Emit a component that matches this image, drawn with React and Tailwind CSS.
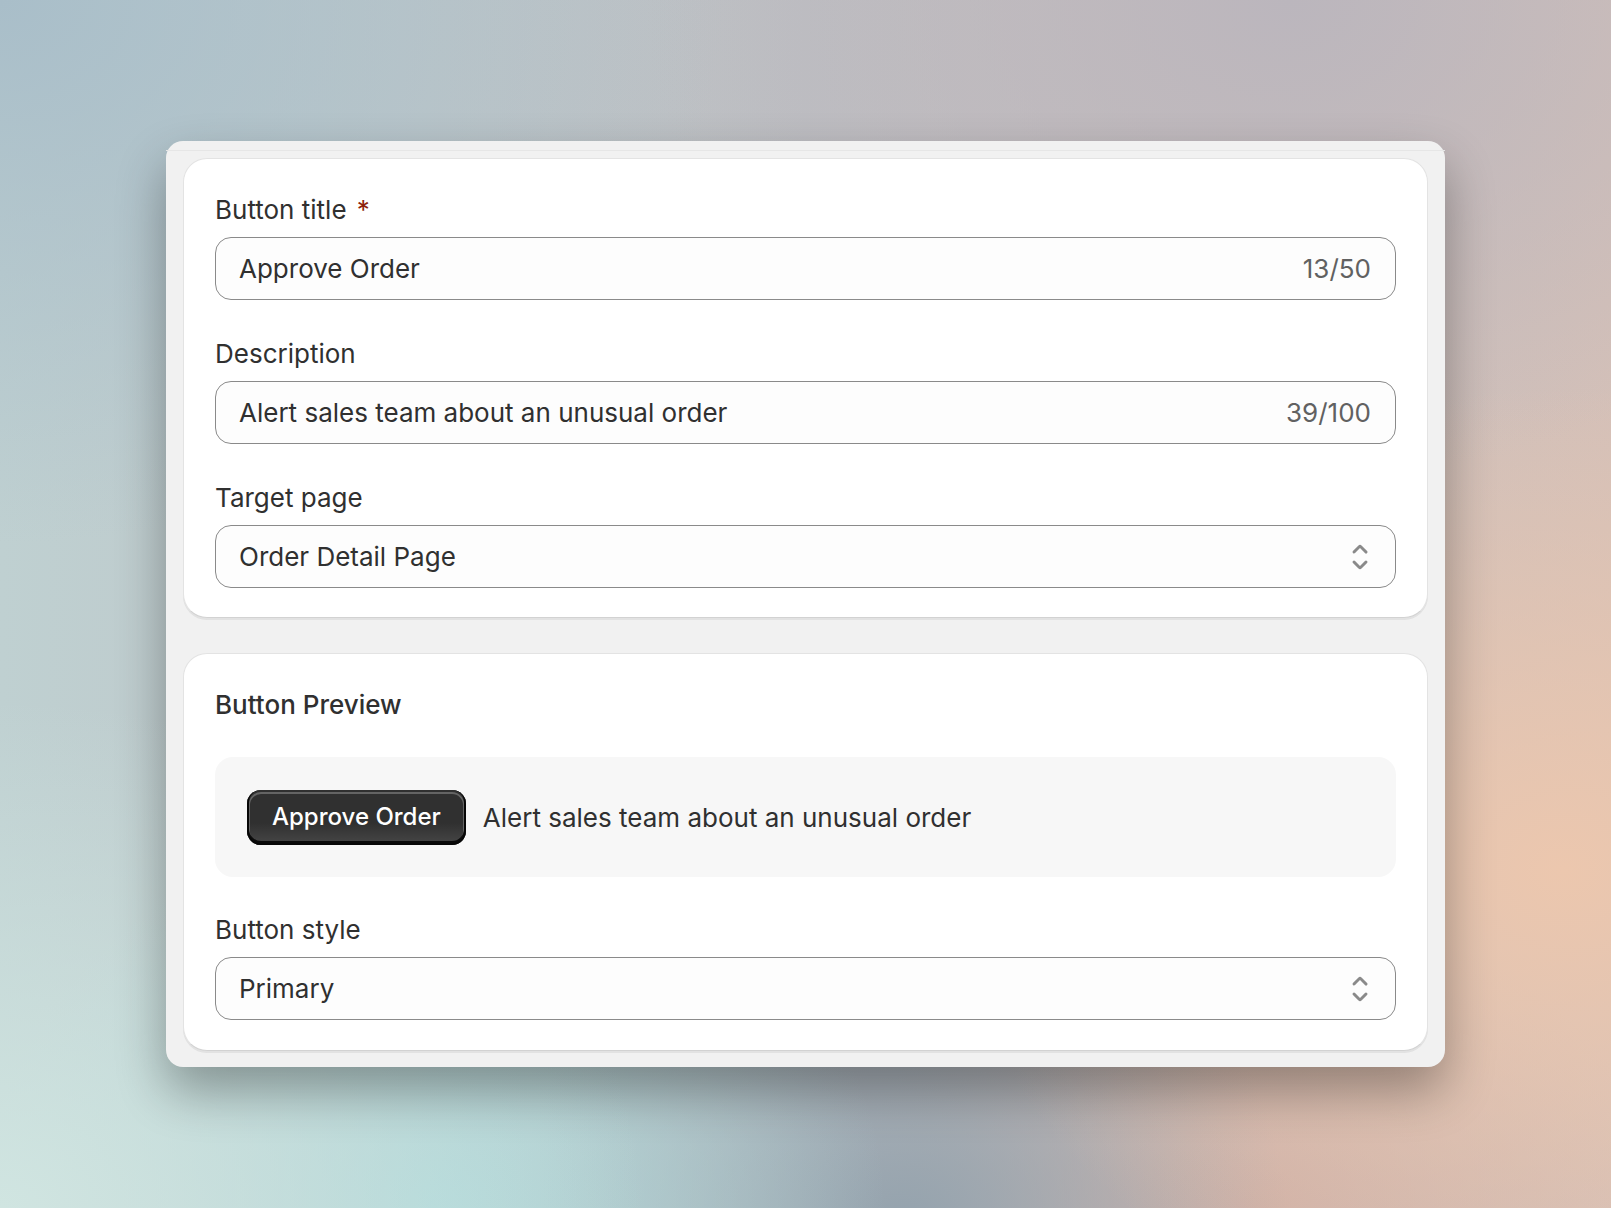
import React from "react";

function SelectIcon() {
  return (
    <svg viewBox="0 0 20 20" className="w-[40px] h-[40px] fill-[#8a8a8a]" aria-hidden="true">
      <path d="M10.884 4.323a1.25 1.25 0 0 0-1.768 0l-2.646 2.647a.75.75 0 0 0 1.06 1.06l2.47-2.47 2.47 2.47a.75.75 0 1 0 1.06-1.06l-2.646-2.647Z" />
      <path d="m13.53 13.03-2.646 2.647a1.25 1.25 0 0 1-1.768 0l-2.646-2.647a.75.75 0 0 1 1.06-1.06l2.47 2.47 2.47-2.47a.75.75 0 0 1 1.06 1.06Z" />
    </svg>
  );
}

function Label({ children, required }) {
  return (
    <div className="text-[26px] leading-[36px] text-[#303030] mb-[9px]">
      {children}
      {required ? <span className="ml-[3px] text-[#8e1f0b]"> *</span> : null}
    </div>
  );
}

function TextInput({ value, counter }) {
  return (
    <div className="h-[63px] rounded-[16px] border border-[#8a8a8a] bg-[#fdfdfd] flex items-center justify-between pl-[23px] pr-[24px] text-[26px] text-[#303030]">
      <span>{value}</span>
      <span className="text-[#616161]">{counter}</span>
    </div>
  );
}

function SelectInput({ value }) {
  return (
    <div className="h-[63px] rounded-[16px] border border-[#8a8a8a] bg-[#fdfdfd] flex items-center justify-between pl-[23px] pr-[15px] text-[26px] text-[#303030]">
      <span>{value}</span>
      <SelectIcon />
    </div>
  );
}

function Card({ children, className }) {
  return (
    <div
      className={
        "bg-white rounded-[24px] border border-[#e3e3e3] border-b-[#d2d2d2] shadow-[0_2px_0_rgba(26,26,26,0.07)] px-[31px] " +
        className
      }
    >
      {children}
    </div>
  );
}

export default function App() {
  return (
    <div className="min-h-screen w-full flex items-center justify-center font-['Inter','Noto_Sans',sans-serif] bg-[radial-gradient(38%_40%_at_97%_72%,#ecc7ae_0%,transparent_100%),radial-gradient(40%_42%_at_0%_100%,#d0e5e1_0%,transparent_100%),radial-gradient(28%_32%_at_27%_100%,#aed8d9_0%,transparent_100%),radial-gradient(24%_30%_at_56%_102%,#93a2ad_0%,transparent_100%),radial-gradient(25%_25%_at_78%_100%,#cfb0a6_0%,transparent_100%),radial-gradient(45%_45%_at_0%_0%,#a9bec9_0%,transparent_100%),radial-gradient(40%_40%_at_80%_0%,#bbb6bd_0%,transparent_100%),linear-gradient(90deg,#bfd0d1_0%,#bdbec2_50%,#d4c0b8_100%)]">
      <div className="w-[1279px] rounded-[17px] bg-[#f1f1f1] pt-[9px] shadow-[0_24px_50px_rgba(0,0,0,0.33)]">
        <div className="border-t border-[#e6e6e6] px-[17px] pt-[7px] pb-[16px] flex flex-col gap-[35px]">
          <Card className="pt-[33px] pb-[29px]">
            <div className="flex flex-col gap-[36px]">
              <div>
                <Label required>Button title</Label>
                <TextInput value="Approve Order" counter="13/50" />
              </div>
              <div>
                <Label>Description</Label>
                <TextInput value="Alert sales team about an unusual order" counter="39/100" />
              </div>
              <div>
                <Label>Target page</Label>
                <SelectInput value="Order Detail Page" />
              </div>
            </div>
          </Card>
          <Card className="pt-[33px] pb-[30px]">
            <div className="text-[26px] leading-[36px] font-[550] text-[#303030]">Button Preview</div>
            <div className="mt-[34px] h-[120px] rounded-[18px] bg-[#f7f7f7] px-[32px] flex items-center gap-[17px]">
              <button className="h-[55px] px-[25px] rounded-[14px] text-white text-[24px] font-[550] bg-[linear-gradient(180deg,#303030_60%,#474747_100%)] shadow-[inset_0_-2px_0_2px_rgba(0,0,0,0.85),inset_0_0_0_2px_#303030,inset_0_1px_0_3px_rgba(255,255,255,0.25)]">
                Approve Order
              </button>
              <span className="text-[26px] text-[#303030]">Alert sales team about an unusual order</span>
            </div>
            <div className="mt-[35px]">
              <Label>Button style</Label>
              <SelectInput value="Primary" />
            </div>
          </Card>
        </div>
      </div>
    </div>
  );
}
